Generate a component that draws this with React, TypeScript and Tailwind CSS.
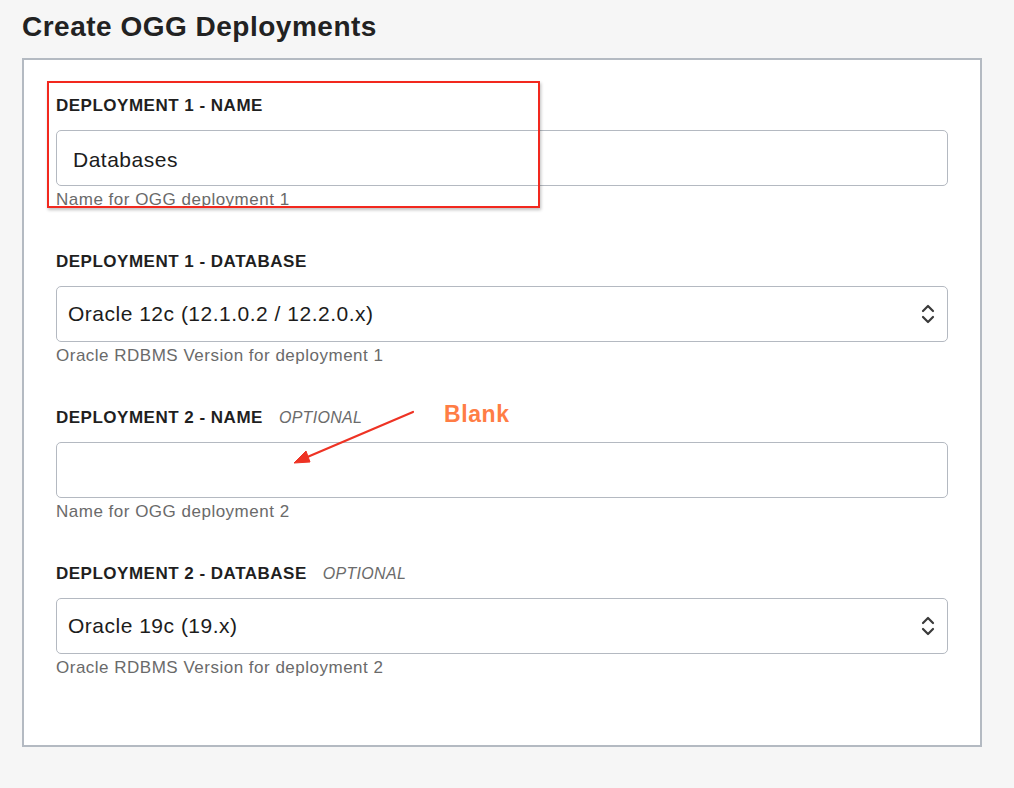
import { ReactNode } from "react";

type FieldProps = {
  label: string;
  optional?: boolean;
  help: string;
  children: ReactNode;
};

function Field({ label, optional, help, children }: FieldProps) {
  return (
    <div className="mb-[42px] flex flex-col">
      <div className="flex h-5 items-center gap-4 leading-5">
        <span className="text-[17px] font-bold tracking-[0.5px] text-[#1f1f1f]">{label}</span>
        {optional ? (
          <span className="text-[16px] italic tracking-[0.3px] text-[#6b6b6b]">OPTIONAL</span>
        ) : null}
      </div>
      <div className="mt-[14px]">{children}</div>
      <p className="mt-[4px] h-5 text-[17px] leading-5 tracking-[0.5px] text-[#6a6a6a]">{help}</p>
    </div>
  );
}

function TextBox({ value }: { value?: string }) {
  return (
    <div className="flex h-[56px] items-center rounded-[5px] border-[1.5px] border-[#b4b9c1] bg-white pl-[16px] pt-[3px] text-[21px] tracking-[0.5px] text-[#1c1c1c]">
      {value}
    </div>
  );
}

function SelectBox({ value }: { value: string }) {
  return (
    <div className="flex h-[56px] items-center justify-between rounded-[5px] border-[1.5px] border-[#b4b9c1] bg-white pl-[11px] pr-[11px] text-[21px] tracking-[0.5px] text-[#1c1c1c]">
      <span>{value}</span>
      <svg width="16" height="26" viewBox="0 0 16 26" fill="none" stroke="#3a3a3a" strokeWidth="2.2" strokeLinecap="round" strokeLinejoin="round">
        <path d="M3 10 L8 5 L13 10" />
        <path d="M3 16 L8 21 L13 16" />
      </svg>
    </div>
  );
}

export default function App() {
  return (
    <div className="relative h-[788px] w-[1014px] overflow-hidden bg-[#f6f6f6] font-['Liberation_Sans',Arial,sans-serif]">
      <div className="pl-[22px] pt-[11px]">
        <h1 className="text-[28px] font-bold leading-8 tracking-[0.5px] text-[#222]">Create OGG Deployments</h1>
        <div className="mt-[15px] h-[689px] w-[960px] border-2 border-[#b4bac2] bg-white px-8 pt-[36px]">
          <Field label="DEPLOYMENT 1 - NAME" help="Name for OGG deployment 1">
            <TextBox value="Databases" />
          </Field>
          <Field label="DEPLOYMENT 1 - DATABASE" help="Oracle RDBMS Version for deployment 1">
            <SelectBox value="Oracle 12c (12.1.0.2 / 12.2.0.x)" />
          </Field>
          <Field label="DEPLOYMENT 2 - NAME" optional help="Name for OGG deployment 2">
            <TextBox />
          </Field>
          <Field label="DEPLOYMENT 2 - DATABASE" optional help="Oracle RDBMS Version for deployment 2">
            <SelectBox value="Oracle 19c (19.x)" />
          </Field>
        </div>
      </div>

      {/* annotations */}
      <div className="absolute left-[47px] top-[81px] h-[127px] w-[493px] border-2 border-[#f2281e] shadow-[1px_2px_3px_rgba(0,0,0,0.25)]" />
      <span className="absolute left-[444px] top-[397px] text-[23px] font-bold tracking-[0.6px] text-[#ff7d45]">Blank</span>
      <svg className="absolute left-0 top-0" width="1014" height="788" fill="none">
        <line x1="413" y1="412" x2="305" y2="458" stroke="#ee3324" strokeWidth="2.2" strokeLinecap="round" />
        <path d="M294 463 L306 451 L310 462 Z" fill="#ee3324" stroke="#ee3324" strokeWidth="1" strokeLinejoin="round" />
      </svg>
    </div>
  );
}
